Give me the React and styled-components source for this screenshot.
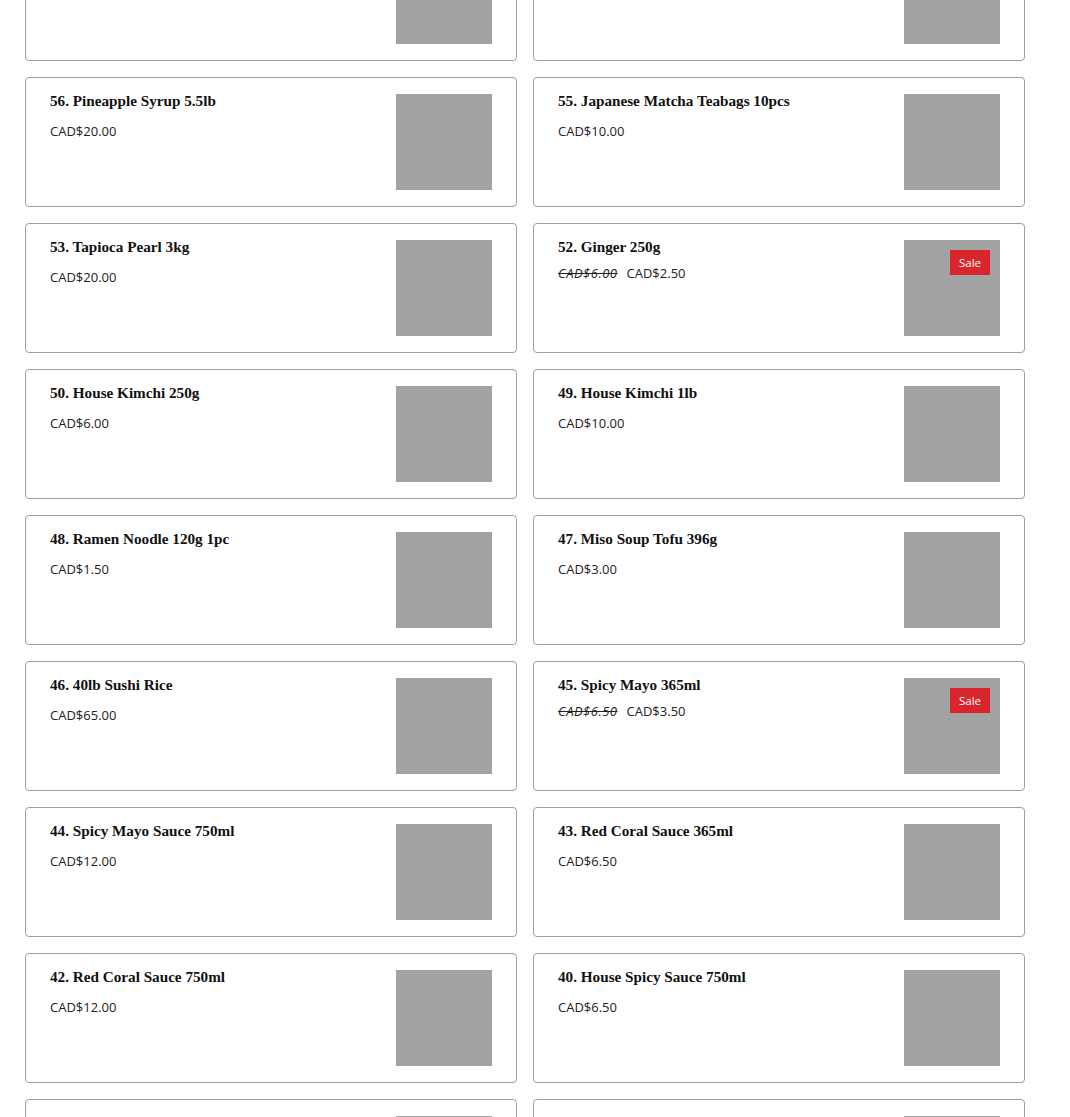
import React from "react";
import styled, { createGlobalStyle } from "styled-components";

const GlobalStyle = createGlobalStyle`
  html, body {
    margin: 0;
    padding: 0;
    background: #fff;
    overflow: hidden;
  }
  body {
    font-family: "Open Sans", "Noto Sans", sans-serif;
    color: #222;
  }
`;

const products = [
  { id: 58, name: "58. Brown Sugar Syrup 5.5lb", price: "CAD$20.00" },
  { id: 57, name: "57. Green Tea Powder 1kg", price: "CAD$25.00" },
  { id: 56, name: "56. Pineapple Syrup 5.5lb", price: "CAD$20.00" },
  { id: 55, name: "55. Japanese Matcha Teabags 10pcs", price: "CAD$10.00" },
  { id: 53, name: "53. Tapioca Pearl 3kg", price: "CAD$20.00" },
  { id: 52, name: "52. Ginger 250g", price: "CAD$2.50", was: "CAD$6.00" },
  { id: 50, name: "50. House Kimchi 250g", price: "CAD$6.00" },
  { id: 49, name: "49. House Kimchi 1lb", price: "CAD$10.00" },
  { id: 48, name: "48. Ramen Noodle 120g 1pc", price: "CAD$1.50" },
  { id: 47, name: "47. Miso Soup Tofu 396g", price: "CAD$3.00" },
  { id: 46, name: "46. 40lb Sushi Rice", price: "CAD$65.00" },
  { id: 45, name: "45. Spicy Mayo 365ml", price: "CAD$3.50", was: "CAD$6.50" },
  { id: 44, name: "44. Spicy Mayo Sauce 750ml", price: "CAD$12.00" },
  { id: 43, name: "43. Red Coral Sauce 365ml", price: "CAD$6.50" },
  { id: 42, name: "42. Red Coral Sauce 750ml", price: "CAD$12.00" },
  { id: 40, name: "40. House Spicy Sauce 750ml", price: "CAD$6.50" },
  { id: 39, name: "39. Eel Sauce 1.8L", price: "CAD$18.00", faded: true },
  { id: 38, name: "38. Hoisin Sauce 365ml", price: "CAD$5.00", faded: true },
];

// page is scrolled: first row sits partly above the viewport
const Page = styled.div`
  padding: 0 45px 0 25px;
  margin-top: -69px;
`;

const Grid = styled.div`
  display: grid;
  grid-template-columns: 492px 492px;
  gap: 16px;
`;

const Card = styled.div`
  box-sizing: border-box;
  height: 130px;
  display: flex;
  justify-content: space-between;
  padding: 16px 24px;
  border: 1px solid #9f9f9f;
  border-radius: 4px;
  background: #fff;
`;

const Info = styled.div`
  display: flex;
  flex-direction: column;
`;

const Title = styled.div`
  font-family: "Liberation Serif", "Times New Roman", serif;
  font-weight: bold;
  font-size: 15.2px;
  line-height: 18px;
  margin-top: -2px;
  color: ${(props) => (props.faded ? "#eeeeee" : "#111")};
`;

const Price = styled.div`
  display: flex;
  gap: 9px;
  font-size: 13px;
  line-height: 18px;
  margin-top: ${(props) => (props.sale ? "8px" : "12px")};
  color: ${(props) => (props.faded ? "#eeeeee" : "#222")};
`;

const Was = styled.span`
  font-style: italic;
  text-decoration: line-through;
  letter-spacing: 0.5px;
`;

const Thumb = styled.div`
  position: relative;
  flex: none;
  width: 96px;
  height: 96px;
  background: #a3a3a3;
`;

const SaleBadge = styled.span`
  position: absolute;
  top: 10px;
  right: 10px;
  width: 40px;
  height: 25px;
  display: flex;
  align-items: center;
  justify-content: center;
  background: #d9262c;
  color: #fff;
  font-size: 11.5px;
`;

function ProductCard({ item }) {
  return (
    <Card>
      <Info>
        <Title faded={item.faded}>{item.name}</Title>
        <Price sale={!!item.was} faded={item.faded}>
          {item.was && <Was>{item.was}</Was>}
          <span>{item.price}</span>
        </Price>
      </Info>
      <Thumb>{item.was && <SaleBadge>Sale</SaleBadge>}</Thumb>
    </Card>
  );
}

export default function App() {
  return (
    <Page>
      <GlobalStyle />
      <Grid>
        {products.map((item) => (
          <ProductCard key={item.id} item={item} />
        ))}
      </Grid>
    </Page>
  );
}
